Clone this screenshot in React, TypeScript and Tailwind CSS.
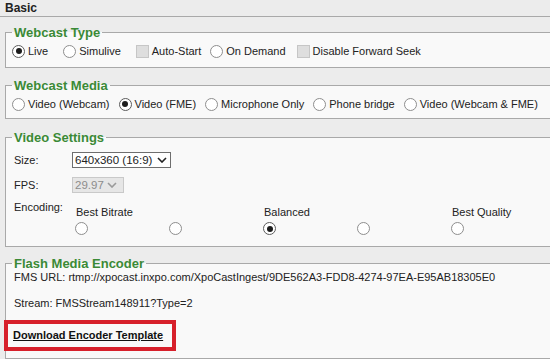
import type { ReactNode } from "react";

function Radio({ checked = false }: { checked?: boolean }) {
  return (
    <span
      className={`flex h-[13px] w-[13px] shrink-0 items-center justify-center rounded-full border bg-white ${
        checked ? "border-[#5c5c5c]" : "border-[#8e8e8e]"
      }`}
    >
      {checked && <span className="h-[6px] w-[6px] rounded-full bg-[#1c1c1c]" />}
    </span>
  );
}

function Check() {
  return <span className="h-[13px] w-[13px] shrink-0 border border-[#c6c6c6] bg-[#dedede]" />;
}

function Option({ control, label, className = "" }: { control: ReactNode; label: string; className?: string }) {
  return (
    <span className={`flex items-center gap-[3px] ${className}`}>
      {control}
      <span>{label}</span>
    </span>
  );
}

function Chevron({ color }: { color: string }) {
  return (
    <svg width="10" height="6" viewBox="0 0 10 6" className="shrink-0">
      <path d="M1 1l4 4 4-4" fill="none" stroke={color} strokeWidth="1.6" />
    </svg>
  );
}

function Group({ title, className, children }: { title: string; className: string; children: ReactNode }) {
  return (
    <fieldset className={`ml-[5px] border-y border-l border-[#a9a9a9] bg-[#f9f9f9] pl-[6px] ${className}`}>
      <legend className="px-[2px] text-[13px] font-bold leading-[15px] text-[#3b8a36]">{title}</legend>
      {children}
    </fieldset>
  );
}

const media = ["Video (Webcam)", "Video (FME)", "Microphone Only", "Phone bridge", "Video (Webcam & FME)"];
const encoding = ["Best Bitrate", "", "Balanced", "", "Best Quality"];

export default function App() {
  return (
    <div
      className="h-[359px] w-[550px] overflow-hidden bg-[#ececec] text-[11px] leading-[14px] text-[#222]"
      style={{ fontFamily: '"Liberation Sans", Arial, sans-serif' }}
    >
      <div className="h-[17px] border-b border-[#a9a9a9] pl-[5px] pt-[1px] text-[12px] font-bold leading-[15px]">
        Basic
      </div>

      <Group title="Webcast Type" className="mt-[8px] pb-[9px]">
        <div className="mt-[4px] flex h-[14px] items-center">
          <Option control={<Radio checked />} label="Live" />
          <Option control={<Radio />} label="Simulive" className="ml-[15px]" />
          <Option control={<Check />} label="Auto-Start" className="ml-[15px]" />
          <Option control={<Radio />} label="On Demand" className="ml-[9px]" />
          <Option control={<Check />} label="Disable Forward Seek" className="ml-[11px]" />
        </div>
      </Group>

      <Group title="Webcast Media" className="mt-[10px] pb-[7px]">
        <div className="mt-[4px] flex h-[14px] items-center gap-[9px]">
          {media.map((m) => (
            <Option key={m} control={<Radio checked={m === "Video (FME)"} />} label={m} />
          ))}
        </div>
      </Group>

      <Group title="Video Settings" className="mt-[11px] pb-[11px]">
        <div className="mt-[7px] flex items-start">
          <span className="w-[60px] pl-[2px] pt-[1px]">Size:</span>
          <div className="flex h-[16px] w-[99px] items-center justify-between border border-[#6e6e6e] bg-white pl-[2px] pr-[3px] text-[11.5px]">
            <span>640x360 (16:9)</span>
            <Chevron color="#222" />
          </div>
        </div>
        <div className="mt-[9px] flex items-start">
          <span className="w-[60px] pl-[2px] pt-[1px]">FPS:</span>
          <div className="flex h-[16px] w-[52px] items-center justify-between border border-[#c9c9c9] bg-[#e6e6e6] pl-[2px] pr-[6px] text-[11.5px] text-[#8c8c8c]">
            <span>29.97</span>
            <Chevron color="#9a9a9a" />
          </div>
        </div>
        <div className="mt-[7px] flex items-start">
          <span className="w-[63px] pl-[2px]">Encoding:</span>
          <div className="grid grid-cols-[repeat(5,94px)] pt-[5px]">
            {encoding.map((e, i) => (
              <div key={i} className="flex flex-col">
                <span className="h-[14px] pl-[1px]">{e}</span>
                <span className="mt-[3px]">
                  <Radio checked={i === 2} />
                </span>
              </div>
            ))}
          </div>
        </div>
      </Group>

      <Group title="Flash Media Encoder" className="mt-[9px] pb-[16px]">
        <div className="-mt-[1px] pl-[2px]">
          FMS URL: rtmp://xpocast.inxpo.com/XpoCastIngest/9DE562A3-FDD8-4274-97EA-E95AB18305E0
        </div>
        <div className="mt-[12px] pl-[2px]">Stream: FMSStream148911?Type=2</div>
        <div className="relative mt-[18px] pl-[1px]">
          <a href="#" className="font-bold text-[#111] underline">
            Download Encoder Template
          </a>
          <span className="absolute -left-[8px] -top-[8px] h-[31px] w-[172px] border-4 border-[#d7202b]" />
        </div>
      </Group>
    </div>
  );
}
